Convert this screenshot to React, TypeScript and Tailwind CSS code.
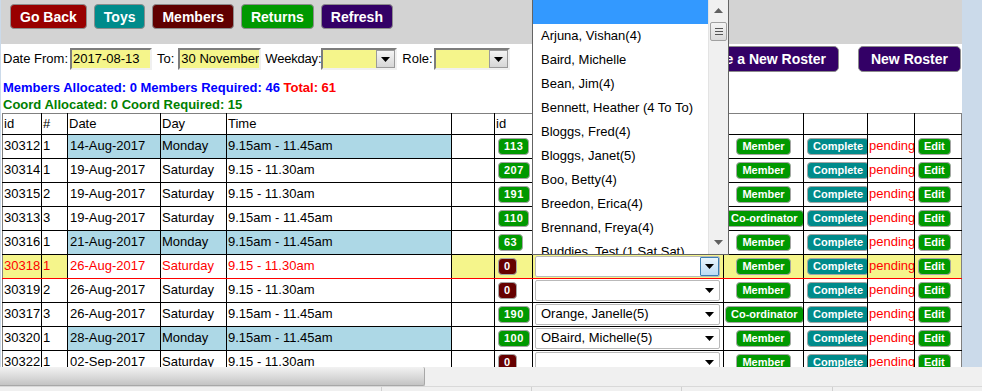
import React from 'react';

type Row = {
  id: string;
  n: string;
  date: string;
  day: string;
  time: string;
  badge: string;
  member: string;
  role: 'Member' | 'Co-ordinator';
  hilite?: boolean;
};

const rows: Row[] = [
  { id: '30312', n: '1', date: '14-Aug-2017', day: 'Monday', time: '9.15am - 11.45am', badge: '113', member: 'Arjuna, Vishan(4)', role: 'Member' },
  { id: '30314', n: '1', date: '19-Aug-2017', day: 'Saturday', time: '9.15 - 11.30am', badge: '207', member: 'Bloggs, Fred(4)', role: 'Member' },
  { id: '30315', n: '2', date: '19-Aug-2017', day: 'Saturday', time: '9.15 - 11.30am', badge: '191', member: 'Boo, Betty(4)', role: 'Member' },
  { id: '30313', n: '3', date: '19-Aug-2017', day: 'Saturday', time: '9.15am - 11.45am', badge: '110', member: 'Bean, Jim(4)', role: 'Co-ordinator' },
  { id: '30316', n: '1', date: '21-Aug-2017', day: 'Monday', time: '9.15am - 11.45am', badge: '63', member: 'Baird, Michelle', role: 'Member' },
  { id: '30318', n: '1', date: '26-Aug-2017', day: 'Saturday', time: '9.15 - 11.30am', badge: '0', member: '', role: 'Member', hilite: true },
  { id: '30319', n: '2', date: '26-Aug-2017', day: 'Saturday', time: '9.15 - 11.30am', badge: '0', member: '', role: 'Member' },
  { id: '30317', n: '3', date: '26-Aug-2017', day: 'Saturday', time: '9.15am - 11.45am', badge: '190', member: 'Orange, Janelle(5)', role: 'Co-ordinator' },
  { id: '30320', n: '1', date: '28-Aug-2017', day: 'Monday', time: '9.15am - 11.45am', badge: '100', member: 'OBaird, Michelle(5)', role: 'Member' },
  { id: '30322', n: '1', date: '02-Sep-2017', day: 'Saturday', time: '9.15 - 11.30am', badge: '0', member: '', role: 'Member' },
];

const options = [
  '',
  'Arjuna, Vishan(4)',
  'Baird, Michelle',
  'Bean, Jim(4)',
  'Bennett, Heather (4 To To)',
  'Bloggs, Fred(4)',
  'Bloggs, Janet(5)',
  'Boo, Betty(4)',
  'Breedon, Erica(4)',
  'Brennand, Freya(4)',
  'Buddies, Test (1 Sat Sat)',
];

const Tri = ({ up, color = '#000' }: { up?: boolean; color?: string }) => (
  <svg width="9" height="5" viewBox="0 0 9 5">
    <polygon points={up ? '0,5 9,5 4.5,0' : '0,0 9,0 4.5,5'} fill={color} />
  </svg>
);

const TopButton = ({ label, bg }: { label: string; bg: string }) => (
  <button className={`h-[25px] px-[9px] rounded-[4px] border border-[#8c8c8c] text-white font-bold text-[14px] leading-none ${bg}`}>
    {label}
  </button>
);

const YellowInput = ({ value, width }: { value: string; width: string }) => (
  <div className={`h-[22px] ${width} bg-[#f5f58b] border-2 border-t-[#7d7d7d] border-l-[#7d7d7d] border-b-[#f0f0f0] border-r-[#f0f0f0] pl-[1px] overflow-hidden whitespace-nowrap leading-[18px]`}>
    {value}
  </div>
);

const YellowSelect = () => (
  <div className="h-[22px] w-[76px] bg-[#f5f58b] border-2 border-t-[#7d7d7d] border-l-[#7d7d7d] border-b-[#f0f0f0] border-r-[#f0f0f0] flex justify-end">
    <div className="w-[19px] h-full bg-linear-to-b from-[#f4f4f4] to-[#d6d6d6] border border-[#9a9a9a] flex items-center justify-center">
      <Tri />
    </div>
  </div>
);

const FakeSelect = ({ value, focused }: { value: string; focused?: boolean }) => (
  <div className="ml-[1px] mr-[2px] h-[21px] flex items-center border border-[#b9b9b9] rounded-[2px] bg-white">
    <span className="flex-1 pl-[5px] whitespace-nowrap overflow-hidden">{value}</span>
    {focused ? (
      <span className="w-[19px] h-[19px] flex items-center justify-center bg-linear-to-b from-[#eaf5fd] to-[#bcdcf5] border border-[#3c7fb1] rounded-[1px]">
        <Tri />
      </span>
    ) : (
      <span className="w-[19px] h-[19px] flex items-center justify-center">
        <Tri />
      </span>
    )}
  </div>
);

const Small = ({ label, bg }: { label: string; bg: string }) => (
  <span className={`inline-block align-middle h-[17px] px-[5px] rounded-[4px] border border-[#a5a5a5] text-white font-bold text-[11px] leading-[15px] ${bg}`}>
    {label}
  </span>
);

export default function App() {
  const cell = 'border border-black px-[1px] whitespace-nowrap overflow-hidden';
  return (
    <div className="relative w-[982px] h-[391px] overflow-hidden bg-[#cbdaea] font-['Liberation_Sans',Arial,sans-serif] text-[13px] text-black">
      <div className="flex h-[367px]">
        <div className="ml-[1px] w-[961px] h-full overflow-hidden bg-white flex flex-col">
          <div className="h-[44px] shrink-0 bg-[#d3d3d3] flex items-start gap-[7px] pt-[4px] pl-[9px]">
            <TopButton label="Go Back" bg="bg-[#990000]" />
            <TopButton label="Toys" bg="bg-[#008b8b]" />
            <TopButton label="Members" bg="bg-[#600000]" />
            <TopButton label="Returns" bg="bg-[#009900]" />
            <TopButton label="Refresh" bg="bg-[#330066]" />
          </div>

          <div className="h-[30px] shrink-0 flex items-center justify-between pl-[2px]">
            <div className="flex items-center">
              <span>Date From:</span>
              <div className="ml-[2px]">
                <YellowInput value="2017-08-13" width="w-[82px]" />
              </div>
              <span className="ml-[5px]">To:</span>
              <div className="ml-[4px]">
                <YellowInput value="30 November" width="w-[83px]" />
              </div>
              <span className="ml-[4px] tracking-[-0.2px]">Weekday:</span>
              <div>
                <YellowSelect />
              </div>
              <span className="ml-[5px]">Role:</span>
              <div className="ml-[1px]">
                <YellowSelect />
              </div>
            </div>
            <div className="flex items-center gap-[19px] pr-[1px]">
              <button className="h-[26px] px-[12px] rounded-[5px] border border-[#8c8c8c] bg-[#330066] text-white font-bold text-[14px] leading-none">
                Create a New Roster
              </button>
              <button className="h-[26px] px-[12px] rounded-[5px] border border-[#8c8c8c] bg-[#330066] text-white font-bold text-[14px] leading-none">
                New Roster
              </button>
            </div>
          </div>

          <div className="mt-[5px] pl-[2px] font-bold leading-[17px]">
            <div>
              <span className="text-[#0000ff]">Members Allocated: 0 Members Required: 46 </span>
              <span className="text-[#ff0000]">Total: 61</span>
            </div>
            <div className="text-[#008000]">Coord Allocated: 0 Coord Required: 15</div>
          </div>

          <table className="ml-[1px] w-[960px] table-fixed border-collapse shrink-0">
            <colgroup>
              <col className="w-[39px]" />
              <col className="w-[26px]" />
              <col className="w-[93px]" />
              <col className="w-[66px]" />
              <col className="w-[225px]" />
              <col className="w-[43px]" />
              <col className="w-[38px]" />
              <col className="w-[191px]" />
              <col className="w-[80px]" />
              <col className="w-[64px]" />
              <col className="w-[47px]" />
              <col className="w-[47px]" />
            </colgroup>
            <thead>
              <tr className="h-[20px]">
                {['id', '#', 'Date', 'Day', 'Time', '', 'id', '', '', '', '', ''].map((h, i) => (
                  <td
                    key={i}
                    className={`${cell} border-t-[#808080] font-normal text-left ${i === 0 ? 'border-l-[#808080]' : ''} ${i === 11 ? 'border-r-[#808080]' : ''}`}
                  >
                    {h}
                  </td>
                ))}
              </tr>
            </thead>
            <tbody>
              {rows.map((r) => {
                const monday = r.day === 'Monday';
                const hl = r.hilite;
                const rowCls = hl ? 'bg-[#f5f58b] text-[#ff0000]' : '';
                const bb = hl ? 'border-b-[#ff0000]' : '';
                const shade = monday ? 'bg-[#add8e6]' : 'bg-white';
                return (
                  <tr key={r.id} className={`h-[24px] ${rowCls}`}>
                    <td className={`${cell} ${bb} border-l-[#808080]`}>{r.id}</td>
                    <td className={`${cell} ${bb}`}>{r.n}</td>
                    <td className={`${cell} ${bb} ${shade} pl-[2px]`}>{r.date}</td>
                    <td className={`${cell} ${bb} ${shade}`}>{r.day}</td>
                    <td className={`${cell} ${bb} ${shade}`}>{r.time}</td>
                    <td className={`${cell} ${bb}`}></td>
                    <td className={`${cell} ${bb} pl-[3px]`}>
                      <Small label={r.badge} bg={r.badge === '0' ? 'bg-[#660000] tracking-[0.5px]' : 'bg-[#009900] tracking-[0.5px]'} />
                    </td>
                    <td className={`${cell} ${bb} px-0 text-black`}>
                      <FakeSelect value={r.member} focused={hl} />
                    </td>
                    <td className={`${cell} ${bb} text-center px-0`}>
                      <Small label={r.role} bg="bg-[#009900]" />
                    </td>
                    <td className={`${cell} ${bb} pl-[3px]`}>
                      <Small label="Complete" bg="bg-[#008b8b] px-[4px]" />
                    </td>
                    <td className={`${cell} ${bb} text-[#ff0000]`}>pending</td>
                    <td className={`${cell} ${bb} pl-[3px] border-r-[#808080]`}>
                      <Small label="Edit" bg="bg-[#009900]" />
                    </td>
                  </tr>
                );
              })}
            </tbody>
          </table>
        </div>
      </div>

      {/* horizontal scrollbar + status strip */}
      <div className="h-[19px] flex bg-[#f0f0f0]">
        <div className="w-[425px] h-full bg-linear-to-b from-[#f2f2f2] via-[#dcdcdc] to-[#c4c4c4] border-r border-b border-[#a8a8a8] rounded-r-[2px]" />
      </div>
      <div className="h-[5px] flex bg-[#f0f0f0] border-t border-[#d9d9d9]">
        <div className="w-[382px] border-r border-[#d0d0d0]" />
        <div className="w-[150px] border-r border-[#d0d0d0]" />
        <div className="w-[150px] border-r border-[#d0d0d0]" />
        <div className="w-[151px] border-r border-[#d0d0d0]" />
      </div>

      {/* open member dropdown */}
      <div className="absolute left-[532px] top-0 w-[197px] h-[255px] bg-white border-l border-r border-b border-[#646464] flex overflow-hidden">
        <div className="flex-1 flex flex-col">
          {options.map((o, i) => (
            <div
              key={i}
              className={`h-[24px] shrink-0 leading-[24px] pl-[8px] whitespace-nowrap ${i === 0 ? 'bg-[#3399ff]' : ''}`}
            >
              {o}
            </div>
          ))}
        </div>
        <div className="w-[20px] h-full bg-[#f0f0f0] border-l border-[#e3e3e3] flex flex-col items-center">
          <div className="mt-[8px] h-[5px] flex items-center">
            <Tri up color="#606060" />
          </div>
          <div className="mt-[9px] w-[17px] h-[19px] bg-linear-to-b from-[#f4f4f4] to-[#dadada] border border-[#a0a0a0] rounded-[2px] flex flex-col items-center justify-center gap-[2px]">
            <div className="w-[8px] h-[1px] bg-[#555]" />
            <div className="w-[8px] h-[1px] bg-[#555]" />
            <div className="w-[8px] h-[1px] bg-[#555]" />
          </div>
          <div className="flex-1" />
          <div className="mb-[9px] h-[5px] flex items-center">
            <Tri color="#606060" />
          </div>
        </div>
      </div>
    </div>
  );
}
